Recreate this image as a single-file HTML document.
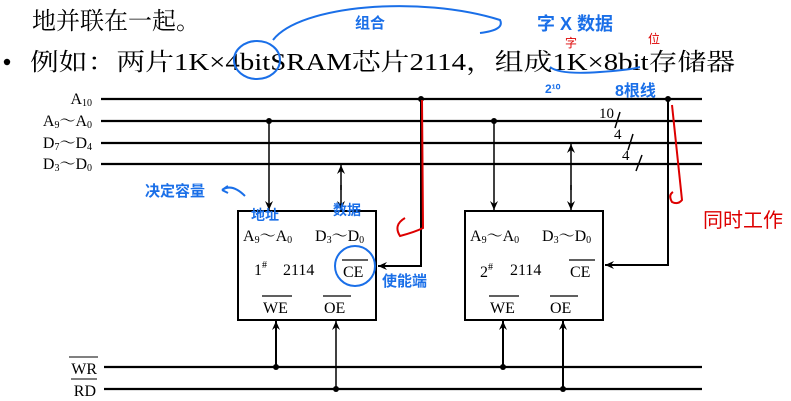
<!DOCTYPE html>
<html><head><meta charset="utf-8"><style>
html,body{margin:0;padding:0;background:#fff;width:791px;height:401px;overflow:hidden}
svg{display:block}
.t{font-family:"Liberation Serif","Noto Serif CJK SC",serif;fill:#000}
.h{font-family:"Liberation Sans","Noto Sans CJK SC",sans-serif;fill:#1a6fe8;font-weight:bold}
.r{font-family:"Liberation Sans","Noto Sans CJK SC",sans-serif;fill:#d00;}
</style></head><body>
<svg width="791" height="401" viewBox="0 0 791 401" xmlns="http://www.w3.org/2000/svg">
<defs>
<marker id="ad" markerWidth="10" markerHeight="8" refX="9" refY="4" orient="auto" markerUnits="userSpaceOnUse">
<path d="M0,0 L9,4 L0,8 L3,4 Z" fill="#000"/></marker>
</defs>
<text class="t" x="32" y="29" font-size="24">地并联在一起。</text>
<circle cx="7" cy="62" r="3.2" fill="#000"/>
<text class="t" x="30" y="70" font-size="24" textLength="705" lengthAdjust="spacingAndGlyphs">例如：两片1K×4bitSRAM芯片2114，组成1K×8bit存储器</text>
<!-- annotations -->
<ellipse cx="257" cy="60" rx="23" ry="19" fill="none" stroke="#1a6fe8" stroke-width="2"/>
<path d="M273,40 C300,5 420,-5 500,20 Q505,30 480,33" fill="none" stroke="#1a6fe8" stroke-width="2"/>
<text class="h" x="355" y="28" font-size="15">组合</text>
<text class="h" x="537" y="30" font-size="18">字 X 数据</text>
<text class="r" x="565" y="47" font-size="12">字</text>
<text class="r" x="648" y="43" font-size="12">位</text>
<path d="M550,67 Q560,75 600,72 Q630,70 640,67" fill="none" stroke="#1a6fe8" stroke-width="2"/>
<text class="h" x="545" y="93" font-size="12">2¹⁰</text>
<text class="h" x="615" y="96" font-size="16">8根线</text>
<!-- bus lines -->
<g stroke="#000" stroke-width="2.2">
<line x1="101" y1="99" x2="702" y2="99"/>
<line x1="101" y1="121" x2="702" y2="121"/>
<line x1="101" y1="143" x2="702" y2="143"/>
<line x1="101" y1="164" x2="702" y2="164"/>
<line x1="104" y1="367" x2="702" y2="367"/>
<line x1="104" y1="389" x2="702" y2="389"/>
</g>
<g class="t" font-size="16" text-anchor="end">
<text x="92" y="104">A<tspan font-size="10" dy="2">10</tspan></text>
<text x="92" y="126">A<tspan font-size="10" dy="2">9</tspan><tspan dy="-2">～A</tspan><tspan font-size="10" dy="2">0</tspan></text>
<text x="92" y="148">D<tspan font-size="10" dy="2">7</tspan><tspan dy="-2">～D</tspan><tspan font-size="10" dy="2">4</tspan></text>
<text x="92" y="169">D<tspan font-size="10" dy="2">3</tspan><tspan dy="-2">～D</tspan><tspan font-size="10" dy="2">0</tspan></text>
<text x="97" y="374">WR</text>
<text x="96" y="396">RD</text>
</g>
<line x1="69" y1="357" x2="98" y2="357" stroke="#000"/>
<line x1="71" y1="379" x2="97" y2="379" stroke="#000"/>
<!-- boxes -->
<rect x="238" y="211" width="138" height="109" fill="none" stroke="#000" stroke-width="2"/>
<rect x="465" y="211" width="138" height="109" fill="none" stroke="#000" stroke-width="2"/>
<g class="t" font-size="16">
<text x="243" y="241">A<tspan font-size="10" dy="2">9</tspan><tspan dy="-2">～A</tspan><tspan font-size="10" dy="2">0</tspan></text>
<text x="315" y="241">D<tspan font-size="10" dy="2">3</tspan><tspan dy="-2">～D</tspan><tspan font-size="10" dy="2">0</tspan></text>
<text x="254" y="275">1<tspan font-size="10" dy="-7">#</tspan></text>
<text x="283" y="275">2114</text>
<text x="343" y="277">CE</text>
<text x="263" y="313">WE</text>
<text x="324" y="313">OE</text>
<text x="470" y="241">A<tspan font-size="10" dy="2">9</tspan><tspan dy="-2">～A</tspan><tspan font-size="10" dy="2">0</tspan></text>
<text x="542" y="241">D<tspan font-size="10" dy="2">3</tspan><tspan dy="-2">～D</tspan><tspan font-size="10" dy="2">0</tspan></text>
<text x="480" y="277">2<tspan font-size="10" dy="-7">#</tspan></text>
<text x="510" y="275">2114</text>
<text x="570" y="277">CE</text>
<text x="490" y="313">WE</text>
<text x="550" y="313">OE</text>
</g>
<g stroke="#000" stroke-width="1.3">
<line x1="342" y1="260" x2="368" y2="260"/><line x1="262" y1="296" x2="292" y2="296"/><line x1="323" y1="296" x2="351" y2="296"/>
<line x1="569" y1="260" x2="595" y2="260"/><line x1="489" y1="296" x2="519" y2="296"/><line x1="550" y1="296" x2="578" y2="296"/>
</g>
<!-- connections -->
<g stroke="#000" stroke-width="1.5" fill="none">
<line x1="269" y1="121" x2="269" y2="210" marker-end="url(#ad)"/>
<line x1="341" y1="185" x2="341" y2="210" marker-end="url(#ad)"/>
<line x1="341" y1="190" x2="341" y2="165" marker-end="url(#ad)"/>
<line x1="494" y1="121" x2="494" y2="210" marker-end="url(#ad)"/>
<line x1="571" y1="185" x2="571" y2="210" marker-end="url(#ad)"/>
<line x1="571" y1="190" x2="571" y2="144" marker-end="url(#ad)"/>
<polyline points="421,99 421,266 378,266" marker-end="url(#ad)" stroke-width="2"/>
<polyline points="668,99 668,265 605,265" marker-end="url(#ad)" stroke-width="2"/>
<line x1="276" y1="367" x2="276" y2="321" marker-end="url(#ad)" stroke-width="2"/>
<line x1="336" y1="389" x2="336" y2="321" marker-end="url(#ad)"/>
<line x1="503" y1="367" x2="503" y2="321" marker-end="url(#ad)" stroke-width="2"/>
<line x1="563" y1="389" x2="563" y2="321" marker-end="url(#ad)" stroke-width="2"/>
<line x1="615" y1="128" x2="620" y2="112"/><line x1="628" y1="150" x2="633" y2="134"/><line x1="636" y1="171" x2="642" y2="155"/>
</g>
<g fill="#000"><circle cx="269" cy="121" r="3"/><circle cx="494" cy="121" r="3"/><circle cx="421" cy="99" r="3"/><circle cx="668" cy="99" r="3"/>
<circle cx="276" cy="367" r="3"/><circle cx="336" cy="389" r="3"/><circle cx="503" cy="367" r="3"/><circle cx="563" cy="389" r="3"/></g>
<g class="t" font-size="15"><text x="599" y="118">10</text><text x="614" y="139">4</text><text x="622" y="160">4</text></g>
<!-- red & blue handwriting -->
<g stroke="#d00" stroke-width="2" fill="none">
<path d="M422,100 L423,228 Q415,232 400,236 Q393,225 405,218"/>
<path d="M672,105 L682,200 Q678,205 672,202 Q668,195 673,192"/>
</g>
<text class="r" x="703" y="227" font-size="20">同时工作</text>
<ellipse cx="355" cy="266" rx="20" ry="20" fill="none" stroke="#1a6fe8" stroke-width="2"/>
<text class="h" x="382" y="286" font-size="15">使能端</text>
<text class="h" x="145" y="196" font-size="15">决定容量</text>
<path d="M222,190 Q232,183 245,196 M222,190 l6,-4 M222,190 l6,3" stroke="#1a6fe8" stroke-width="2" fill="none"/>
<text class="h" x="251" y="220" font-size="14">地址</text>
<text class="h" x="333" y="215" font-size="14">数据</text>
</svg>
</body></html>
